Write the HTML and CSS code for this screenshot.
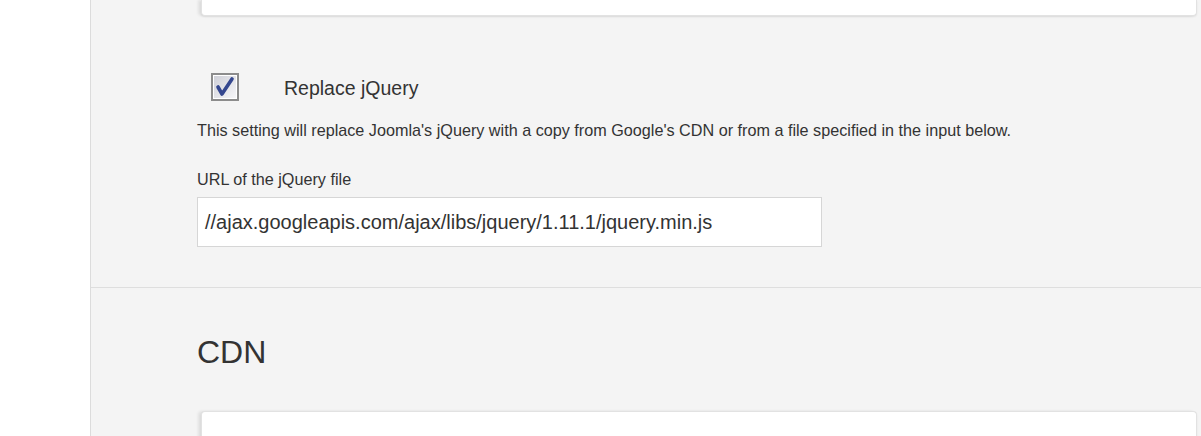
FILE: index.html
```html
<!DOCTYPE html>
<html>
<head>
<meta charset="utf-8">
<link rel="stylesheet" href="styles.css">
</head>
<body>
<div class="page">
  <aside class="sidebar"></aside>
  <main class="main">
    <section class="section first">
      <div class="card top-card"></div>
      <div class="check-row">
        <span class="checkbox">
          <svg width="28" height="28" viewBox="0 0 28 28">
            <defs>
              <linearGradient id="cbg" x1="0" y1="0" x2="1" y2="1">
                <stop offset="0" stop-color="#cfd0d8"/>
                <stop offset="1" stop-color="#f6f6f8"/>
              </linearGradient>
            </defs>
            <rect x="1" y="1" width="26" height="26" fill="#fff" stroke="#8c8c8c" stroke-width="2"/>
            <rect x="3" y="3" width="22" height="22" fill="url(#cbg)"/>
            <path d="M7 14 L11 21 L21 6" fill="none" stroke="#34478f" stroke-width="3.6" stroke-linejoin="round" stroke-linecap="round"/>
          </svg>
        </span>
        <span class="check-label">Replace jQuery</span>
      </div>
      <p class="desc">This setting will replace Joomla's jQuery with a copy from Google's CDN or from a file specified in the input below.</p>
      <label class="field-label">URL of the jQuery file</label>
      <div class="input">//ajax.googleapis.com/ajax/libs/jquery/1.11.1/jquery.min.js</div>
    </section>
    <section class="section second">
      <h2 class="heading">CDN</h2>
      <div class="card bottom-card"></div>
    </section>
  </main>
</div>
</body>
</html>
```

FILE: styles.css
```css
html, body {
  margin: 0;
  padding: 0;
  height: 436px;
  overflow: hidden;
  background: #fff;
  font-family: "Liberation Sans", Arial, sans-serif;
  color: #333;
}
.page {
  display: flex;
  height: 436px;
}
.sidebar {
  width: 90px;
  flex: none;
  background: #fff;
}
.main {
  flex: 1;
  border-left: 1px solid #dcdcdc;
  background: #f4f4f4;
}
.section {
  padding-left: 106px;
  padding-right: 4px;
}
.first {
  padding-bottom: 40px;
  border-bottom: 1px solid #dedede;
}
.card {
  background: #fff;
  margin-left: 4px;
  border: 1px solid #e2e2e2;
  box-shadow: -3px 0 3px rgba(0,0,0,0.08), 0 1px 2px rgba(0,0,0,0.08);
}
.top-card {
  height: 15px;
  border-top: none;
  border-radius: 0 0 4px 4px;
}
.check-row {
  display: flex;
  align-items: center;
  margin-top: 57px;
  height: 28px;
}
.checkbox {
  display: block;
  width: 28px;
  height: 28px;
  margin-left: 14px;
}
.checkbox svg { display: block; }
.check-label {
  margin-left: 45px;
  font-size: 19.5px;
  color: #333;
  position: relative;
  top: 1px;
}
.desc {
  margin: 19px 0 0;
  font-size: 16.2px;
  line-height: 20px;
  color: #333;
}
.field-label {
  display: block;
  margin-top: 29px;
  font-size: 16.2px;
  line-height: 20px;
  color: #333;
}
.input {
  margin-top: 8px;
  height: 48px;
  border: 1px solid #d6d6d6;
  background: #fff;
  box-sizing: content-box;
  padding: 0 0 0 7px;
  width: 616px;
  font-size: 20px;
  line-height: 48px;
  color: #333;
}
.heading {
  margin: 46px 0 0;
  font-size: 32px;
  line-height: 36px;
  font-weight: normal;
  color: #333;
}
.bottom-card {
  margin-top: 41px;
  height: 40px;
  border-bottom: none;
  border-radius: 4px 4px 0 0;
}
```
